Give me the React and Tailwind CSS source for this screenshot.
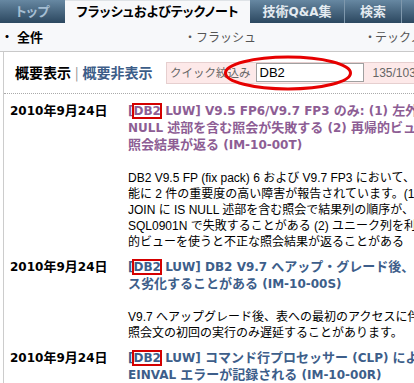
import React from "react";

const ASCII = /^[\x20-\x7E]+$/;

function Mixed({ text }) {
  const parts = text.match(/[\x20-\x7E]+|[^\x20-\x7E]+/g) || [];
  return parts.map((p, i) =>
    ASCII.test(p) ? (
      <span key={i} className="text-[12px]">
        {p}
      </span>
    ) : (
      <span key={i} className="text-[13px]">
        {p}
      </span>
    )
  );
}

function TitleLine({ parts }) {
  return (
    <div className="h-[17px] leading-[17px] whitespace-nowrap">
      {parts.map((p, i) =>
        typeof p === "string" ? (
          <Mixed key={i} text={p} />
        ) : (
          <span
            key={i}
            className="text-[12px] outline-2 outline-solid outline-[#d40000] outline-offset-[-1px]"
          >
            {p.hl}
          </span>
        )
      )}
    </div>
  );
}

const entries = [
  {
    date: "2010年9月24日",
    color: "text-[#8d5d94]",
    title: [
      ["[", { hl: "DB2" }, " LUW] V9.5 FP6/V9.7 FP3 のみ: (1) 左外部結合"],
      ["NULL 述部を含む照会が失敗する (2) 再帰的ビューを"],
      ["照会結果が返る (IM-10-00T)"],
    ],
    body: [
      "DB2 V9.5 FP (fix pack) 6 および V9.7 FP3 において、次の",
      "能に 2 件の重要度の高い障害が報告されています。(1)",
      "JOIN に IS NULL 述部を含む照会で結果列の順序が、ル",
      "SQL0901N で失敗することがある (2) ユニーク列を利用した",
      "的ビューを使うと不正な照会結果が返ることがある",
    ],
  },
  {
    date: "2010年9月24日",
    color: "text-[#3d5e8a]",
    title: [
      ["[", { hl: "DB2" }, " LUW] DB2 V9.7 へアップ・グレード後、一時的にパフォーマン"],
      ["ス劣化することがある (IM-10-00S)"],
    ],
    body: [
      "V9.7 へアップグレード後、表への最初のアクセスに伴い",
      "照会文の初回の実行のみ遅延することがあります。",
    ],
  },
  {
    date: "2010年9月24日",
    color: "text-[#3d5e8a]",
    title: [
      ["[", { hl: "DB2" }, " LUW] コマンド行プロセッサー (CLP) によって"],
      ["EINVAL エラーが記録される (IM-10-00R)"],
    ],
    body: [],
  },
];

const MIX_FONT =
  "[font-family:'DejaVu_Sans','Noto_Sans_CJK_JP',sans-serif]";

export default function App() {
  return (
    <div className="relative w-[414px] h-[383px] overflow-hidden bg-white">
      <div className="w-[700px]">
        {/* Tab bar */}
        <div
          className={`flex h-[23px] bg-linear-to-b from-[#6788a2] to-[#2c4860] ${MIX_FONT} font-bold text-[13px] [font-feature-settings:'palt']`}
        >
          <div className="w-[65px] flex items-center justify-center text-[#a5bed3]">
            トップ
          </div>
          <div className="w-[185px] flex items-center justify-center bg-[#f7f8fa] text-black border-t border-[#dfe3e7]">
            フラッシュおよびテックノート
          </div>
          <div className="w-[95px] flex items-center justify-center text-[#e4ebf1] border-r border-[#7f98ac]">
            <Mixed text="技術Q&A集" />
          </div>
          <div className="w-[57px] flex items-center justify-center text-[#e4ebf1] border-r border-[#7f98ac]">
            検索
          </div>
          <div className="w-[100px] flex items-center justify-center text-[#e4ebf1] border-r border-[#7f98ac]">
            サポート
          </div>
        </div>

        {/* Sub navigation */}
        <div className="flex h-[29px] items-center bg-[#f7f8fa] border-b border-[#c9c9c9] [font-family:'Noto_Sans_CJK_JP',sans-serif]">
          <div className="w-[184px] pl-[1px] flex items-center">
            <span className="w-[10px] text-center text-[12px] font-bold text-black">・</span>
            <span className="ml-[6px] text-[13px] font-bold text-black">全件</span>
          </div>
          <div className="w-[180px] flex items-center">
            <span className="w-[10px] text-center text-[12px] text-[#555]">・</span>
            <span className="ml-[2px] text-[12px] text-[#555]">フラッシュ</span>
          </div>
          <div className="flex items-center">
            <span className="w-[10px] text-center text-[12px] text-[#555]">・</span>
            <span className="ml-[1px] text-[12px] text-[#555]">テックノート</span>
          </div>
        </div>

        {/* Main */}
        <div className="ml-[3px] border-l border-[#cccccc]">
          {/* Filter row */}
          <div className="flex items-center h-[42px] border-b border-dotted border-[#aaaaaa]">
            <div className="w-[162px] pl-[11px] flex items-center [font-family:'Noto_Sans_CJK_JP',sans-serif] text-[14px] font-bold">
              <span className="text-black">概要表示</span>
              <span className="mx-[4px] font-normal text-[13px] text-[#888]">|</span>
              <span className="text-[#3c5d88]">概要非表示</span>
            </div>
            <div className="flex-1 h-[22px] flex items-center bg-[#fde9e9] border border-[#e6cfcf] pl-[3px]">
              <span className="text-[11.5px] text-[#666] [font-family:'Noto_Sans_CJK_JP',sans-serif]">
                クイック絞込み
              </span>
              <div className="ml-[5px] w-[108px] h-[19px] bg-white border border-[#a0a0a0] flex items-center pl-[3px] text-[13px] text-black [font-family:'Liberation_Sans',sans-serif]">
                DB2
              </div>
              <span className="ml-[9px] text-[12px] text-[#666] [font-family:'Liberation_Sans','Noto_Sans_CJK_JP',sans-serif]">
                135/1036件
              </span>
            </div>
          </div>

          {/* Entries */}
          {entries.map((e, idx) => (
            <div key={idx} className="flex pt-[8px]">
              <div
                className={`w-[124px] h-[17px] pl-[6px] shrink-0 ${MIX_FONT} font-bold text-black text-[12px] leading-[17px] whitespace-nowrap`}
              >
                <Mixed text={e.date} />
              </div>
              <div className="flex-1">
                <div className={`${MIX_FONT} font-bold ${e.color} text-[12px]`}>
                  {e.title.map((line, i) => (
                    <TitleLine key={i} parts={line} />
                  ))}
                </div>
                {e.body.length > 0 && (
                  <div className="mt-[17px] [font-family:'Liberation_Sans','Noto_Sans_CJK_JP',sans-serif] text-[12px] text-black">
                    {e.body.map((l, i) => (
                      <div key={i} className="h-[16px] leading-[16px] whitespace-nowrap">
                        {l}
                      </div>
                    ))}
                  </div>
                )}
              </div>
            </div>
          ))}
        </div>
      </div>

      {/* Red ellipse annotation */}
      <svg
        className="absolute left-[223px] top-[55px] pointer-events-none"
        width="130"
        height="36"
        viewBox="0 0 130 36"
      >
        <ellipse
          cx="65"
          cy="18"
          rx="62.5"
          ry="16"
          fill="none"
          stroke="#e60000"
          strokeWidth="3"
        />
      </svg>
    </div>
  );
}
